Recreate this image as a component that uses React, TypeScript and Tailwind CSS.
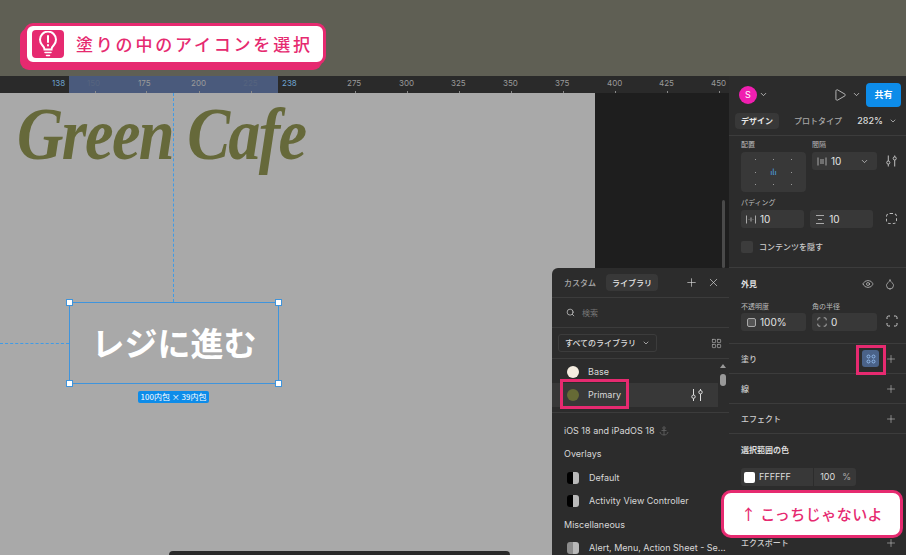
import { ChevronDown, Eye, Droplet, Plus, X, Search, Play, LayoutGrid } from "lucide-react";

const ticks = [
  { v: "150", x: 95, faint: true },
  { v: "175", x: 146 },
  { v: "200", x: 199 },
  { v: "225", x: 251, faint: true },
  { v: "275", x: 355 },
  { v: "300", x: 407 },
  { v: "325", x: 459 },
  { v: "350", x: 511 },
  { v: "375", x: 563 },
  { v: "400", x: 615 },
  { v: "425", x: 667 },
  { v: "450", x: 719 },
];

function Bulb() {
  return (
    <svg width="24" height="26" viewBox="0 0 24 26" fill="none" stroke="white" strokeWidth="2" strokeLinecap="round">
      <path d="M8.5 18.5c0-2-1-3-2.5-4.6A8 8 0 0 1 4 8.6a8 8 0 0 1 16 0c0 2-.8 3.8-2 5.3-1.5 1.6-2.5 2.6-2.5 4.6z" />
      <path d="M12 5v6M12 14v.4" />
      <path d="M9 21.5h6M10.5 24.5h3" strokeWidth="1.5" />
    </svg>
  );
}

function Sliders({ className = "" }: { className?: string }) {
  return (
    <svg width="12" height="14" viewBox="0 0 12 14" fill="none" stroke="currentColor" strokeWidth="1" className={className}>
      <path d="M2.5 1v6M2.5 10.500V13M9.500 1v1.500M9.500 6v7" />
      <circle cx="2.5" cy="8.700" r="1.700" />
      <circle cx="9.500" cy="4.200" r="1.700" />
    </svg>
  );
}

function Corners() {
  return (
    <svg width="12" height="12" viewBox="0 0 12 12" fill="none" stroke="#c8c8c8" strokeWidth="1">
      <path d="M1 4V2.500A1.500 1.500 0 0 1 2.500 1H4M8 1h1.500A1.500 1.500 0 0 1 11 2.500V4M11 8v1.500A1.500 1.500 0 0 1 9.500 11H8M4 11H2.500A1.500 1.500 0 0 1 1 9.500V8" />
    </svg>
  );
}

function Field({ icon, value, chevron }: { icon: React.ReactNode; value: string; chevron?: boolean }) {
  return (
    <div className="flex h-[18px] w-[65px] items-center gap-[4px] rounded-[3px] bg-[#383838] pl-[5px] pr-1 font-['Inter',sans-serif] text-[10px] text-[#e4e4e4]">
      <span className="flex w-[10px] justify-center text-[#a8a8a8]">{icon}</span>
      <span>{value}</span>
      {chevron && <ChevronDown size={9} className="ml-auto mr-1 text-[#ccc]" />}
    </div>
  );
}

function GapIcon() {
  return (
    <svg width="10" height="9" viewBox="0 0 10 9" fill="none" stroke="currentColor" strokeWidth="1">
      <path d="M1 .5v8M9 .5v8M4 2v5M6 2v5" />
    </svg>
  );
}

function PadIcon() {
  return (
    <svg width="10" height="9" viewBox="0 0 10 9" fill="none" stroke="currentColor" strokeWidth="1">
      <path d="M.5.5v8M9.5.5v8M5 2.500v4M3 4.500v.5M7 4.500v.5" />
    </svg>
  );
}

function PadVIcon() {
  return (
    <svg width="10" height="9" viewBox="0 0 10 9" fill="none" stroke="currentColor" strokeWidth="1">
      <path d="M1 .5h8M1 8.500h8M3 4.500h4" />
    </svg>
  );
}

function Row({ label, children }: { label: string; children?: React.ReactNode }) {
  return (
    <div className="flex h-[30px] items-center border-b border-[#3c3c3c] pl-3 pr-[9px] text-[8px] font-medium text-[#cfcfcf]">
      <span>{label}</span>
      <span className="ml-auto flex items-center gap-[6px]">
        {children}
        <Plus size={12} strokeWidth={1.2} className="text-[#c8c8c8]" />
      </span>
    </div>
  );
}

function HalfSwatch({ gray }: { gray?: boolean }) {
  return (
    <span className="flex h-3 w-3 overflow-hidden rounded-[3px]">
      <span className={gray ? "w-1/2 bg-[#8c8c8c]" : "w-1/2 bg-black"} />
      <span className="w-1/2 bg-[#b9b9b9]" />
    </span>
  );
}

function ColorPopup() {
  return (
    <div className="absolute bottom-0 left-[552px] top-[268px] w-[177px] overflow-hidden rounded-tl-md bg-[#2c2c2c] text-[#e0e0e0]">
      <div className="flex h-[30px] items-center border-b border-[#3c3c3c] pl-[12px] pr-[9px] text-[8px] font-medium">
        <span className="text-[#a8a8a8]">カスタム</span>
        <span className="ml-[10px] flex h-[17px] items-center rounded-[4px] bg-[#383838] px-[6px] text-[#e8e8e8]">ライブラリ</span>
        <Plus size={13} strokeWidth={1.2} className="ml-auto mr-[1px] text-[#ddd]" />
        <X size={13} strokeWidth={1.2} className="ml-[8px] text-[#ddd]" />
      </div>
      <div className="flex h-[30px] items-center gap-[7px] border-b border-[#3c3c3c] pl-[14px] text-[8px] text-[#777]">
        <Search size={9} className="text-[#ccc]" />
        <span>検索</span>
      </div>
      <div className="flex h-[31px] items-center border-b border-[#3c3c3c] pl-[6px] pr-[7px]">
        <span className="flex h-[18px] items-center gap-[6px] rounded-[3px] border border-[#3c3c3c] px-[6px] text-[8px] font-medium text-[#ddd]">
          すべてのライブラリ
          <ChevronDown size={8} />
        </span>
        <LayoutGrid size={11} strokeWidth={1.2} className="ml-auto text-[#ccc]" />
      </div>
      <div className="relative h-[54px] border-b border-[#3c3c3c] pt-[1px] font-['Inter',sans-serif] text-[9px] text-[#d8d8d8]">
        <div className="flex h-[23px] items-center gap-[9px] pl-[15px]">
          <span className="h-3 w-3 rounded-full bg-[#f5ede0]" />
          Base
        </div>
        <div className="flex h-6 w-[166px] items-center gap-[9px] bg-[#383838] pl-[15px]">
          <span className="h-3 w-3 rounded-full bg-[#666a35]" />
          Primary
          <Sliders className="ml-auto mr-[15px] text-[#ddd]" />
        </div>
        <div className="absolute right-[3px] top-[5px] h-0 w-0 border-x-[3px] border-b-[4px] border-x-transparent border-b-[#999]" />
        <div className="absolute right-[3px] top-[15px] h-[12px] w-[6px] rounded-full bg-[#999]" />
      </div>
      <div className="flex flex-col font-['Inter',sans-serif] text-[9px] text-[#d8d8d8]">
        <div className="flex h-[35px] items-center gap-[5px] pl-[12px]">
          iOS 18 and iPadOS 18
          <svg width="10" height="10" viewBox="0 0 10 10" fill="none" stroke="#666" strokeWidth="0.8">
            <circle cx="5" cy="2" r="1.2" />
            <path d="M5 3.200v5.800M2.500 4.500h5M1 6c.5 2 2 3 4 3s3.500-1 4-3" />
          </svg>
        </div>
        <div className="flex h-[12px] items-center pl-[12px]">Overlays</div>
        <div className="flex h-[35px] items-center gap-[10px] pl-[15px]">
          <HalfSwatch />
          Default
        </div>
        <div className="flex h-[12px] items-center gap-[10px] pl-[15px]">
          <HalfSwatch />
          Activity View Controller
        </div>
        <div className="flex h-[35px] items-center pl-[12px]">Miscellaneous</div>
        <div className="flex h-[12px] items-center gap-[10px] pl-[15px]">
          <HalfSwatch gray />
          Alert, Menu, Action Sheet - Se...
        </div>
      </div>
    </div>
  );
}

function Inspector() {
  return (
    <div className="w-[177px] shrink-0 bg-[#2c2c2c] text-[#d8d8d8]">
      <div className="flex h-[60px] flex-col border-b border-[#3c3c3c] pl-[6px] pr-[5px]">
        <div className="flex h-[37px] items-center">
          <span className="ml-[4px] flex h-[18px] w-[18px] items-center justify-center rounded-full bg-[#f01fb0] font-['Inter',sans-serif] text-[9px] text-white">S</span>
          <ChevronDown size={9} className="ml-[2px]" />
          <Play size={14} strokeWidth={1.2} className="ml-auto text-[#eee]" />
          <ChevronDown size={9} className="ml-[5px] mr-[5px]" />
          <span className="flex h-6 w-[35px] items-center justify-center rounded-[4px] bg-[#0d8ce9] text-[9px] font-bold text-white">共有</span>
        </div>
        <div className="flex items-center text-[8px] font-medium">
          <span className="flex h-4 items-center rounded-[4px] bg-[#383838] px-[6px] font-bold text-[#e8e8e8]">デザイン</span>
          <span className="ml-[15px] text-[#a8a8a8]">プロトタイプ</span>
          <span className="ml-auto font-['Inter',sans-serif] text-[9px] text-[#ddd]">282%</span>
          <ChevronDown size={8} className="ml-[6px] mr-[4px]" />
        </div>
      </div>
      <div className="h-[132px] border-b border-[#3c3c3c] pl-3 pr-[9px] pt-[3px] text-[7px] text-[#bbb]">
        <div className="flex gap-[6px]">
          <div>
            <div className="mb-[1px] h-[12px]">配置</div>
            <div className="grid h-[40px] w-[65px] grid-cols-3 place-items-center rounded-[4px] bg-[#383838] px-[6px] py-[3px]">
              {[0, 1, 2, 3, 4, 5, 6, 7, 8].map((i) =>
                i === 4 ? (
                  <span key={i} className="text-[8px] leading-none text-[#4ea3e8]">ılı</span>
                ) : (
                  <span key={i} className="h-[1px] w-[1px] bg-[#999]" />
                )
              )}
            </div>
          </div>
          <div>
            <div className="mb-[1px] h-[12px]">間隔</div>
            <Field icon={<GapIcon />} value="10" chevron />
          </div>
          <Sliders className="ml-[3px] mt-[15px] text-[#ccc]" />
        </div>
        <div className="mt-[5px] h-[12px]">パディング</div>
        <div className="mt-[1px] flex gap-[6px]">
          <Field icon={<PadIcon />} value="10" />
          <Field icon={<PadVIcon />} value="10" />
          <span className="ml-[7px] mt-[3px] h-[11px] w-[11px] rounded-[4px] border border-dashed border-[#bbb]" />
        </div>
        <div className="mt-[13px] flex items-center gap-[6px] text-[8px] font-medium text-[#ccc]">
          <span className="h-3 w-3 rounded-[2px] bg-[#3c3c3c]" />
          コンテンツを隠す
        </div>
      </div>
      <div className="h-[76px] border-b border-[#3c3c3c] pl-3 pr-[9px] pt-[9px]">
        <div className="flex h-[14px] items-center text-[8px] font-bold text-[#e0e0e0]">
          外見
          <Eye size={12} strokeWidth={1.2} className="ml-auto" />
          <Droplet size={12} strokeWidth={1.2} className="ml-[10px] mr-[1px]" />
        </div>
        <div className="mt-[10px] flex gap-[6px] text-[7px] text-[#bbb]">
          <div>
            <div className="mb-[1px] h-[11px]">不透明度</div>
            <Field icon={<span className="block h-[9px] w-[9px] rounded-[2px] border border-[#aaa] bg-[#555]" />} value="100%" />
          </div>
          <div>
            <div className="mb-[1px] h-[11px]">角の半径</div>
            <Field icon={<Corners />} value="0" />
          </div>
          <div className="ml-[3px] mt-[14px]">
            <Corners />
          </div>
        </div>
      </div>
      <Row label="塗り">
        <span className="flex h-[17px] w-[17px] items-center justify-center rounded-[3px] bg-[#4a6288]">
          <svg width="10" height="10" viewBox="0 0 10 10" fill="none" stroke="#8fb8ea" strokeWidth="1">
            <circle cx="2.5" cy="2.5" r="1.5" />
            <circle cx="7.5" cy="2.5" r="1.5" />
            <circle cx="2.5" cy="7.5" r="1.5" />
            <circle cx="7.5" cy="7.5" r="1.5" />
          </svg>
        </span>
      </Row>
      <Row label="線" />
      <Row label="エフェクト" />
      <div className="pl-3 pr-[9px]">
        <div className="flex h-[31px] items-center text-[8px] font-bold text-[#dcdcdc]">選択範囲の色</div>
        <div className="mt-[3px] flex h-[18px] w-[115px] items-center rounded-[3px] bg-[#383838] pl-[3px] font-['Inter',sans-serif] text-[9px] text-[#ddd]">
          <span className="h-[11px] w-[11px] rounded-[2px] bg-white" />
          <span className="ml-[4px]">FFFFFF</span>
          <span className="ml-auto flex h-full items-center gap-[7px] border-l border-[#2c2c2c] pl-[6px] pr-[5px]">
            100 <span className="text-[#aaa]">%</span>
          </span>
        </div>
        <div className="mt-[49px] flex h-[16px] items-center text-[8px] font-medium text-[#cfcfcf]">
          エクスポート
          <Plus size={12} strokeWidth={1.2} className="ml-auto text-[#c8c8c8]" />
        </div>
      </div>
    </div>
  );
}

export default function App() {
  return (
    <div className="relative flex h-[555px] w-[906px] flex-col overflow-hidden bg-[#1e1e1e] font-['Noto_Sans_CJK_JP',sans-serif]">
      {/* band above the editor */}
      <div className="flex h-[76px] shrink-0 items-start bg-[#5f5f54] pl-6 pt-[23px]">
        <div className="flex h-[42px] w-[302px] items-center rounded-[9px] border-[3px] border-[#e62a70] bg-white pl-[5px] shadow-[-4px_5px_0_0_#e62a70]">
          <span className="flex h-7 w-8 shrink-0 items-center justify-center rounded-[4px] bg-[#e62a70]">
            <Bulb />
          </span>
          <span className="ml-3 whitespace-nowrap text-[17px] font-medium tracking-[2.800px] text-[#e62a70]">塗りの中のアイコンを選択</span>
        </div>
      </div>

      <div className="flex min-h-0 flex-1">
        <div className="flex w-[729px] shrink-0 flex-col">
          {/* ruler */}
          <div className="relative h-[17px] shrink-0 bg-[#2a2a2a] font-['Inter',sans-serif] text-[8px] leading-[15px] text-[#8e8e8e]">
            <div className="absolute bottom-0 left-[69px] top-0 w-[209px] bg-[#4a5a7c]" />
            <span className="absolute left-[52px] text-[#6ea3cf]">138</span>
            <span className="absolute left-[282px] text-[#6ea3cf]">238</span>
            {ticks.map((t) => (
              <span key={t.v} className={t.faint ? "absolute text-[#56647f]" : "absolute text-[#9a9a9a]"} style={{ left: t.x - 8 }}>
                {t.v}
              </span>
            ))}
            {ticks.map((t) => (
              <div key={t.v} className="absolute bottom-0 h-[2px] w-[1px] bg-[#8a8a8a]" style={{ left: t.x }} />
            ))}
          </div>

          <div className="relative flex min-h-0 flex-1">
            <div className="relative w-[595px] overflow-hidden bg-[#a9a9a9]">
              <span className="absolute left-[17px] top-[3px] origin-left scale-x-[0.87] whitespace-nowrap font-['Liberation_Serif',serif] text-[74px] font-bold italic leading-[76px] tracking-[-2px] text-[#66693a]">
                Green Cafe
              </span>
              <div className="absolute left-[173px] top-0 h-[209px] border-l border-dashed border-[#3f9be6]" />
              <div className="absolute left-0 top-[250px] w-[69px] border-t border-dashed border-[#3f9be6]" />
              {/* selected button */}
              <div className="absolute left-[69px] top-[209px] flex h-[82px] w-[210px] items-center justify-center border-[1.5px] border-[#3f94dc] text-[33px] font-bold text-white">
                レジに進む
                <span className="absolute -left-[4px] -top-[4px] h-[7px] w-[7px] border border-[#3f94dc] bg-white" />
                <span className="absolute -right-[4px] -top-[4px] h-[7px] w-[7px] border border-[#3f94dc] bg-white" />
                <span className="absolute -bottom-[4px] -left-[4px] h-[7px] w-[7px] border border-[#3f94dc] bg-white" />
                <span className="absolute -bottom-[4px] -right-[4px] h-[7px] w-[7px] border border-[#3f94dc] bg-white" />
              </div>
              <span className="absolute left-[138px] top-[298px] flex h-[12px] w-[71px] items-center justify-center rounded-[2px] bg-[#0d8ce9] text-[8px] text-white">
                100内包 × 39内包
              </span>
              <div className="absolute bottom-0 left-[169px] h-[4px] w-[341px] rounded-t-md bg-[#2a2a2a]" />
            </div>
            <div className="flex-1 bg-[#1e1e1e]" />
            <div className="absolute left-[722px] top-[107px] h-[68px] w-[3px] rounded-full bg-[#4a4a4a]" />
          </div>
        </div>
        <Inspector />
      </div>

      <ColorPopup />

      {/* red highlight boxes */}
      <div className="absolute left-[560px] top-[379px] h-[30px] w-[69px] border-[3px] border-[#e62a70]" />
      <div className="absolute left-[856px] top-[345px] h-[30px] w-[30px] border-[3px] border-[#e62a70]" />

      {/* callout */}
      <div className="absolute left-[721px] top-[490px] flex h-[48px] w-[182px] items-center justify-center rounded-[10px] border-[3px] border-[#e62a70] bg-white text-[15px] font-medium tracking-[0.500px] text-[#e62a70]">
        ↑ こっちじゃないよ
      </div>
    </div>
  );
}
